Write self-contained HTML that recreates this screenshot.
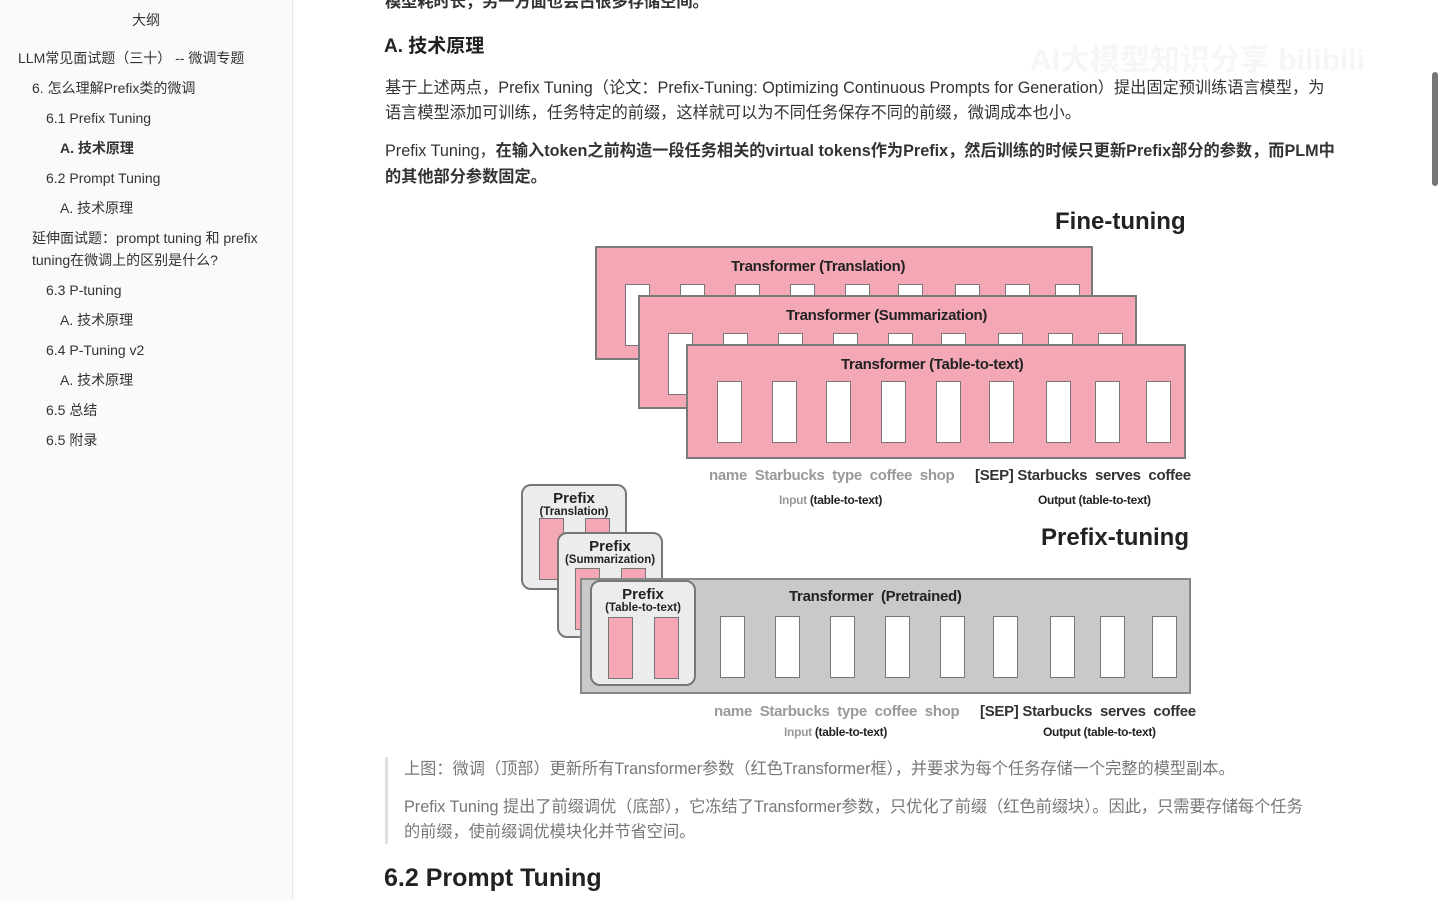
<!DOCTYPE html>
<html><head><meta charset="utf-8"><style>
*{margin:0;padding:0;box-sizing:border-box}
body{width:1440px;height:900px;overflow:hidden;background:#fff;position:relative;font-family:"Liberation Sans","Noto Sans CJK SC",sans-serif;color:#333}
.a{position:absolute;white-space:nowrap;line-height:20px}
#side{position:absolute;left:0;top:0;width:293px;height:900px;background:#fafafa;border-right:1px solid #e6e6e6}
#side .a{font-size:14px;color:#333;line-height:18px}
.p{font-size:16.2px;color:#333}
.box{position:absolute;border:2px solid #7a7a7a}
.pk{background:#f4a8b5}
.w{position:absolute;background:#fff;border:1.5px solid #777;width:25px}
.lab{position:absolute;font-weight:bold;font-size:15px;white-space:nowrap;letter-spacing:-0.3px;line-height:18px}
.sm{position:absolute;font-weight:bold;font-size:12px;white-space:nowrap;color:#222;letter-spacing:-0.3px;line-height:14px}
.pf{position:absolute;width:106px;height:106px;background:#ececec;border:2px solid #777;border-radius:10px;text-align:center;font-weight:bold;color:#222}
.pf b{display:block;font-size:15px;line-height:15px;margin-top:5px}
.pf i{display:block;font-style:normal;font-size:11.5px;line-height:13px}
.pb{position:absolute;background:#f4a8b5;border:1.5px solid #777;width:25px;height:62px}
</style></head><body>
<div id="side">
<div class="a" style="left:132px;top:11px">大纲</div>
<div class="a" style="left:18px;top:49px">LLM常见面试题（三十） -- 微调专题</div>
<div class="a" style="left:32px;top:79px">6. 怎么理解Prefix类的微调</div>
<div class="a" style="left:46px;top:109px">6.1 Prefix Tuning</div>
<div class="a" style="left:60px;top:139px;font-weight:bold">A. 技术原理</div>
<div class="a" style="left:46px;top:169px">6.2 Prompt Tuning</div>
<div class="a" style="left:60px;top:199px">A. 技术原理</div>
<div class="a" style="left:32px;top:229px">延伸面试题：prompt tuning 和 prefix</div>
<div class="a" style="left:32px;top:251px">tuning在微调上的区别是什么?</div>
<div class="a" style="left:46px;top:281px">6.3 P-tuning</div>
<div class="a" style="left:60px;top:311px">A. 技术原理</div>
<div class="a" style="left:46px;top:341px">6.4 P-Tuning v2</div>
<div class="a" style="left:60px;top:371px">A. 技术原理</div>
<div class="a" style="left:46px;top:401px">6.5 总结</div>
<div class="a" style="left:46px;top:431px">6.5 附录</div>
</div>

<div class="a p" style="left:385px;top:-8px;font-weight:bold">模型耗时长，另一方面也会占很多存储空间。</div>
<div class="a" style="left:384px;top:36px;font-size:19px;font-weight:bold;color:#222;line-height:22px">A. 技术原理</div>
<div class="a" style="left:1030px;top:44px;font-size:30px;font-weight:bold;color:#f6f6f6;line-height:34px">AI大模型知识分享 bilibili</div>
<div class="a p" style="left:385px;top:78px">基于上述两点，Prefix Tuning（论文：Prefix-Tuning: Optimizing Continuous Prompts for Generation）提出固定预训练语言模型，为</div>
<div class="a p" style="left:385px;top:103px">语言模型添加可训练，任务特定的前缀，这样就可以为不同任务保存不同的前缀，微调成本也小。</div>
<div class="a p" style="left:385px;top:141px">Prefix Tuning，<b>在输入token之前构造一段任务相关的virtual tokens作为Prefix，然后训练的时候只更新Prefix部分的参数，而PLM中</b></div>
<div class="a p" style="left:385px;top:167px;font-weight:bold">的其他部分参数固定。</div>

<div style="position:absolute;left:1432px;top:72px;width:6px;height:114px;background:#777;border-radius:3px"></div>

<!-- Fine-tuning -->
<div class="a" style="left:1055px;top:208px;font-size:24px;font-weight:bold;color:#222;line-height:28px">Fine-tuning</div>
<div class="box pk" style="left:595px;top:246px;width:498px;height:114px"></div>
<div class="lab" style="left:731px;top:258px;color:#222">Transformer (Translation)</div>
<div class="w" style="left:625px;top:284px;height:62px"></div>
<div class="w" style="left:680px;top:284px;height:14px"></div><div class="w" style="left:735px;top:284px;height:14px"></div><div class="w" style="left:790px;top:284px;height:14px"></div><div class="w" style="left:845px;top:284px;height:14px"></div><div class="w" style="left:898px;top:284px;height:14px"></div><div class="w" style="left:955px;top:284px;height:14px"></div><div class="w" style="left:1005px;top:284px;height:14px"></div><div class="w" style="left:1055px;top:284px;height:14px"></div>
<div class="box pk" style="left:638px;top:295px;width:499px;height:114px"></div>
<div class="lab" style="left:786px;top:307px;color:#222">Transformer (Summarization)</div>
<div class="w" style="left:668px;top:333px;height:62px"></div>
<div class="w" style="left:723px;top:333px;height:14px"></div><div class="w" style="left:778px;top:333px;height:14px"></div><div class="w" style="left:833px;top:333px;height:14px"></div><div class="w" style="left:888px;top:333px;height:14px"></div><div class="w" style="left:941px;top:333px;height:14px"></div><div class="w" style="left:998px;top:333px;height:14px"></div><div class="w" style="left:1048px;top:333px;height:14px"></div><div class="w" style="left:1098px;top:333px;height:14px"></div>
<div class="box pk" style="left:686px;top:344px;width:500px;height:115px"></div>
<div class="lab" style="left:841px;top:356px;color:#222">Transformer (Table-to-text)</div>
<div class="w" style="left:717px;top:381px;height:62px"></div><div class="w" style="left:772px;top:381px;height:62px"></div><div class="w" style="left:826px;top:381px;height:62px"></div><div class="w" style="left:881px;top:381px;height:62px"></div><div class="w" style="left:936px;top:381px;height:62px"></div><div class="w" style="left:989px;top:381px;height:62px"></div><div class="w" style="left:1046px;top:381px;height:62px"></div><div class="w" style="left:1095px;top:381px;height:62px"></div><div class="w" style="left:1146px;top:381px;height:62px"></div>
<div class="lab" style="left:709px;top:467px;color:#999">name&nbsp; Starbucks&nbsp; type&nbsp; coffee&nbsp; shop</div>
<div class="lab" style="left:975px;top:467px;color:#333">[SEP] Starbucks&nbsp; serves&nbsp; coffee</div>
<div class="sm" style="left:779px;top:493px"><span style="color:#999">Input</span> (table-to-text)</div>
<div class="sm" style="left:1038px;top:493px">Output (table-to-text)</div>

<!-- Prefix-tuning -->
<div class="a" style="left:1041px;top:524px;font-size:24px;font-weight:bold;color:#222;line-height:28px">Prefix-tuning</div>
<div class="pf" style="left:521px;top:484px"><b>Prefix</b><i>(Translation)</i></div>
<div class="pb" style="left:539px;top:518px"></div><div class="pb" style="left:585px;top:518px"></div>
<div class="pf" style="left:557px;top:532px"><b>Prefix</b><i>(Summarization)</i></div>
<div class="pb" style="left:575px;top:568px"></div><div class="pb" style="left:621px;top:568px;height:14px"></div>
<div class="box" style="left:580px;top:578px;width:611px;height:116px;background:#c9c9c9;border-color:#888"></div>
<div class="pf" style="left:590px;top:580px"><b>Prefix</b><i>(Table-to-text)</i></div>
<div class="pb" style="left:608px;top:617px"></div><div class="pb" style="left:654px;top:617px"></div>
<div class="lab" style="left:789px;top:588px;color:#222">Transformer&nbsp; (Pretrained)</div>
<div class="w" style="left:720px;top:616px;height:62px"></div><div class="w" style="left:775px;top:616px;height:62px"></div><div class="w" style="left:830px;top:616px;height:62px"></div><div class="w" style="left:885px;top:616px;height:62px"></div><div class="w" style="left:940px;top:616px;height:62px"></div><div class="w" style="left:993px;top:616px;height:62px"></div><div class="w" style="left:1050px;top:616px;height:62px"></div><div class="w" style="left:1100px;top:616px;height:62px"></div><div class="w" style="left:1152px;top:616px;height:62px"></div>
<div class="lab" style="left:714px;top:703px;color:#999">name&nbsp; Starbucks&nbsp; type&nbsp; coffee&nbsp; shop</div>
<div class="lab" style="left:980px;top:703px;color:#333">[SEP] Starbucks&nbsp; serves&nbsp; coffee</div>
<div class="sm" style="left:784px;top:725px"><span style="color:#999">Input</span> (table-to-text)</div>
<div class="sm" style="left:1043px;top:725px">Output (table-to-text)</div>

<div style="position:absolute;left:385px;top:757px;width:3px;height:87px;background:#e0e0e0"></div>
<div class="a p" style="left:404px;top:759px;color:#777">上图：微调（顶部）更新所有Transformer参数（红色Transformer框），并要求为每个任务存储一个完整的模型副本。</div>
<div class="a p" style="left:404px;top:797px;color:#777">Prefix Tuning 提出了前缀调优（底部），它冻结了Transformer参数，只优化了前缀（红色前缀块）。因此，只需要存储每个任务</div>
<div class="a p" style="left:404px;top:822px;color:#777">的前缀，使前缀调优模块化并节省空间。</div>
<div class="a" style="left:384px;top:864px;font-size:25px;font-weight:bold;color:#222;line-height:28px">6.2 Prompt Tuning</div>
</body></html>
